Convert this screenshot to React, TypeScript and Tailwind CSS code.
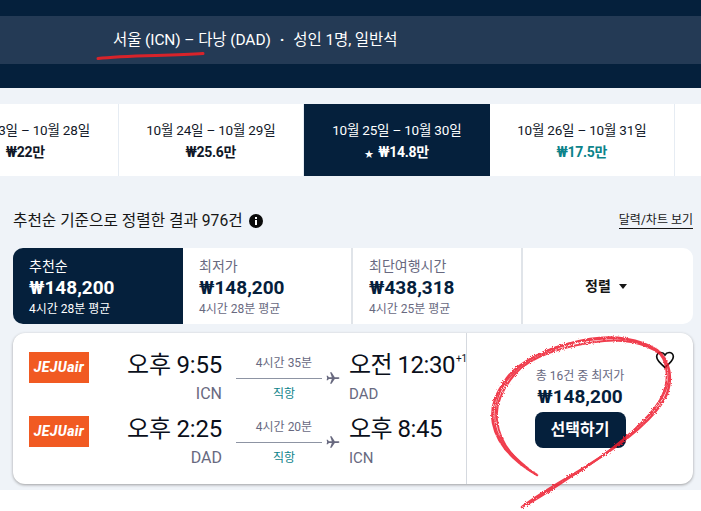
import React from "react";

const font = { fontFamily: 'Roboto,"Noto Sans CJK KR",sans-serif' };

function Plane() {
  return (
    <svg width="14" height="14" viewBox="0 0 24 24" className="shrink-0 fill-[#68697f]">
      <path d="M23 12c0-.9-.9-1.500-2-1.500h-6L9.500 2H7l3 8.500H5L3 8H1l1 4-1 4h2l2-2.500h5L7 22h2.500L15 13.500h6c1.100 0 2-.6 2-1.500z" />
    </svg>
  );
}

function Leg({ dep, from, dur, arr, sup, to }: { dep: string; from: string; dur: string; arr: string; sup?: boolean; to: string }) {
  return (
    <div className="flex h-[50px] items-start whitespace-nowrap">
      <div className="flex h-[31px] w-[60px] shrink-0 items-center justify-center bg-[#f15a22] text-[14px] font-extrabold italic tracking-[0.4px] text-white">
        JEJUair
      </div>
      <div className="flex w-[133px] shrink-0 flex-col items-end">
        <div className="text-[24px] leading-[26px] tracking-[-0.2px] text-[#0a0f1a]">{dep}</div>
        <div className="mt-[8px] text-[16px] leading-[16px] text-[#68697f]">{from}</div>
      </div>
      <div className="ml-[14px] flex w-[104px] shrink-0 flex-col">
        <div className="w-[96px] pt-[4px] text-center text-[12px] leading-[14px] text-[#68697f]">{dur}</div>
        <div className="mt-[1px] flex h-[14px] items-center gap-[4px]">
          <div className="h-[1px] w-[87px] bg-[#8d94a3]" />
          <Plane />
        </div>
        <div className="mt-[1px] w-[96px] text-center text-[12px] leading-[16px] text-[#0c838a]">직항</div>
      </div>
      <div className="ml-[9px] flex flex-col items-start">
        <div className="flex text-[24px] leading-[26px] tracking-[-0.5px] text-[#0a0f1a]">
          {arr}
          {sup && <span className="ml-[1px] mt-[1px] text-[10px] leading-[12px] tracking-normal">+1</span>}
        </div>
        <div className="mt-[8px] text-[15px] leading-[16px] text-[#68697f]">{to}</div>
      </div>
    </div>
  );
}

function DateCell({ date, price, star = false, tone = "", selected = false }: { date: string; price: string; star?: boolean; tone?: string; selected?: boolean }) {
  return (
    <div className={`flex h-[72px] w-[185.500px] shrink-0 flex-col items-center justify-center whitespace-nowrap ${selected ? "bg-[#05203c] text-white" : "border-r border-[#e6ecf3] bg-white text-[#111827]"}`}>
      <div className="mt-[1px] h-[20px] text-[13.500px] leading-[20px] tracking-[-0.2px]">{date}</div>
      <div className={`mt-[2px] h-[20px] text-[14px] font-bold leading-[20px] tracking-[-0.3px] ${tone}`}>
        {star && <span className="mr-[5px] text-[9px]">★</span>}
        {price}
      </div>
    </div>
  );
}

function SortTab({ label, price, sub, active = false }: { label: string; price: string; sub: string; active?: boolean }) {
  return (
    <div className={`flex h-[76px] w-[170px] flex-col whitespace-nowrap border-r-2 pl-[16px] ${active ? "border-[#05203c] bg-[#05203c] text-white" : "border-[#e0e4e9] bg-white text-[#05203c]"}`}>
      <div className={`mt-[10px] text-[14px] leading-[16px] ${active ? "text-white" : "text-[#68697f]"}`}>{label}</div>
      <div className="mt-[1px] text-[19px] font-bold leading-[26px]">{price}</div>
      <div className={`mt-[1px] text-[12px] leading-[14px] ${active ? "text-white" : "text-[#68697f]"}`}>{sub}</div>
    </div>
  );
}

export default function App() {
  return (
    <div className="relative h-[511px] w-[701px] overflow-hidden bg-white" style={font}>
      <div className="h-[88px] bg-[#05203c] pt-[16px] shadow-[0_1px_3px_rgba(0,0,0,0.35)]">
        <div className="flex h-[48px] items-center bg-[#243a55] pl-[113px] pt-[1px] text-[15.500px] tracking-[-0.1px] text-white">
          <span>서울 (ICN) – 다낭 (DAD)</span>
          <span className="ml-[9px] font-bold">·</span>
          <span className="ml-[9px]">성인 1명, 일반석</span>
        </div>
      </div>

      <div className="h-[402px] bg-[#eff3f8] pt-[16px]">
        <div className="ml-[-67px] flex w-[800px]">
          <DateCell date="10월 23일 – 10월 28일" price="₩22만" />
          <DateCell date="10월 24일 – 10월 29일" price="₩25.6만" />
          <DateCell date="10월 25일 – 10월 30일" price="₩14.8만" star selected />
          <DateCell date="10월 26일 – 10월 31일" price="₩17.5만" tone="text-[#0c838a]" />
          <DateCell date="" price="" />
        </div>

        <div className="ml-[13px] mr-[8px] mt-[34px] flex h-[22px] items-center justify-between whitespace-nowrap">
          <div className="flex items-center gap-[6px]">
            <span className="text-[15.700px] leading-[22px] text-[#161616]">추천순 기준으로 정렬한 결과 976건</span>
            <svg width="14" height="14" viewBox="0 0 14 14">
              <circle cx="7" cy="7" r="7" fill="#0b0b0b" />
              <rect x="6" y="6" width="2" height="5" fill="#fff" />
              <rect x="6" y="3" width="2" height="2" fill="#fff" />
            </svg>
          </div>
          <span className="border-b border-[#161616] text-[12px] leading-[15px] text-[#161616]">달력/차트 보기</span>
        </div>

        <div className="ml-[13px] mr-[8px] mt-[16px] flex h-[76px] overflow-hidden rounded-[10px] bg-white">
          <SortTab active label="추천순" price="₩148,200" sub="4시간 28분 평균" />
          <SortTab label="최저가" price="₩148,200" sub="4시간 28분 평균" />
          <SortTab label="최단여행시간" price="₩438,318" sub="4시간 25분 평균" />
          <div className="flex flex-1 items-center justify-center gap-[8px] pr-[4px] text-[14px] font-bold text-[#161616]">
            정렬
            <span className="h-0 w-0 border-x-[4.500px] border-t-[5px] border-x-transparent border-t-[#161616]" />
          </div>
        </div>

        <div className="relative ml-[13px] mr-[8px] mt-[9px] flex h-[151px] rounded-[12px] bg-white shadow-[0_1px_3px_rgba(37,32,31,0.4)]">
          <div className="flex w-[454px] shrink-0 flex-col gap-[14px] border-r border-[#d5d9df] pl-[16px] pt-[19px]">
            <Leg dep="오후 9:55" from="ICN" dur="4시간 35분" arr="오전 12:30" sup to="DAD" />
            <Leg dep="오후 2:25" from="DAD" dur="4시간 20분" arr="오후 8:45" to="ICN" />
          </div>
          <div className="flex flex-1 flex-col items-center whitespace-nowrap pt-[36px]">
            <div className="text-[12px] leading-[14px] text-[#68697f]">총 16건 중 최저가</div>
            <div className="mt-[1px] text-[19px] font-bold leading-[26px] text-[#05203c]">₩148,200</div>
            <div className="mt-[2px] flex h-[36px] w-[91px] items-center justify-center rounded-[8px] bg-[#05203c] text-[16px] font-bold text-white">선택하기</div>
          </div>
          <svg width="20" height="20" viewBox="0 0 24 24" className="absolute right-[18px] top-[17px] fill-none stroke-[#0b0b0b] stroke-2">
            <path d="M12 21C6 16 2 12.500 2 8.200 2 5 4.400 3 7 3c2 0 3.800 1 5 3 1.200-2 3-3 5-3 2.600 0 5 2 5 5.200C22 12.500 18 16 12 21z" />
          </svg>
        </div>
      </div>

      <svg width="701" height="511" viewBox="0 0 701 511" className="pointer-events-none absolute left-0 top-0">
        <defs>
          <filter id="grain" x="-5%" y="-5%" width="110%" height="110%">
            <feTurbulence type="fractalNoise" baseFrequency="0.9" numOctaves="2" seed="3" result="n" />
            <feDisplacementMap in="SourceGraphic" in2="n" scale="3" />
          </filter>
        </defs>
        <path d="M98 58.500C125 55 170 56 203 53.500" fill="none" stroke="#d8232a" strokeWidth="3" strokeLinecap="round" />
        <g fill="none" stroke="#ee1c2e" strokeLinecap="round" opacity="0.85" filter="url(#grain)">
          <path d="M537 475C515 462 497 445 493 423C490 405 497 392 507 378C522 358 560 344 590 339C615 335 640 339 657 350C670 360 674 380 665 398C653 420 625 442 590 464C570 477 545 490 522 507" strokeWidth="2.500" />
          <path d="M532 472C512 458 499 440 497 420C495 403 503 388 515 374C530 356 565 346 595 342C620 338 645 342 660 354C668 364 670 382 660 400C648 420 620 444 585 468C565 480 545 495 526 505" strokeWidth="2" />
          <path d="M528 468C508 452 494 436 495 418C495 400 501 386 511 376C528 354 562 342 592 340C618 336 642 340 658 352C672 362 672 380 662 398C650 420 622 442 588 466C568 478 548 490 524 506" strokeWidth="1.500" />
        </g>
      </svg>
    </div>
  );
}
